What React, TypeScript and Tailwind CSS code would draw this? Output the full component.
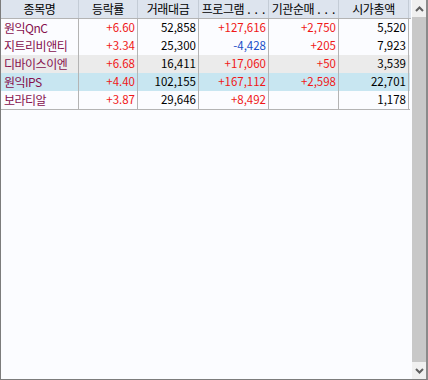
import React from "react";

type Row = {
  name: string;
  rate: string;
  vol: string;
  prog: string;
  inst: string;
  cap: string;
  bg: string;
};

const rows: Row[] = [
  { name: "원익QnC", rate: "+6.60", vol: "52,858", prog: "+127,616", inst: "+2,750", cap: "5,520", bg: "bg-[#fbfcff]" },
  { name: "지트리비앤티", rate: "+3.34", vol: "25,300", prog: "-4,428", inst: "+205", cap: "7,923", bg: "bg-[#fbfcff]" },
  { name: "디바이스이엔", rate: "+6.68", vol: "16,411", prog: "+17,060", inst: "+50", cap: "3,539", bg: "bg-[#ebebeb]" },
  { name: "원익IPS", rate: "+4.40", vol: "102,155", prog: "+167,112", inst: "+2,598", cap: "22,701", bg: "bg-[#c8e6f1]" },
  { name: "보라티알", rate: "+3.87", vol: "29,646", prog: "+8,492", inst: "", cap: "1,178", bg: "bg-[#fbfcff]" },
];

const widths = ["w-[78px]", "w-[59px]", "w-[61px]", "w-[70px]", "w-[70px]", "w-[70px]"];
const headers: { t: string; dots?: boolean }[] = [
  { t: "종목명" },
  { t: "등락률" },
  { t: "거래대금" },
  { t: "프로그램", dots: true },
  { t: "기관순매", dots: true },
  { t: "시가총액" },
];

const font = { fontFamily: '"Noto Sans CJK KR", "Noto Sans", sans-serif' };

function colorOf(v: string) {
  if (v.startsWith("+")) return "text-[#f01818]";
  if (v.startsWith("-")) return "text-[#1a4fc8]";
  return "text-black";
}

function NumCell({ w, v, color }: { w: string; v: string; color?: string }) {
  return (
    <div
      className={`${w} shrink-0 h-full border-r border-[#b4b4b4] flex items-center justify-end pr-[2px] text-[11.5px] ${color ?? colorOf(v)}`}
    >
      {v}
    </div>
  );
}

export default function App() {
  return (
    <div
      className="w-[428px] h-[380px] flex border-l border-b border-r-2 border-l-[#7c7c7c] border-b-[#7c7c7c] border-r-[#8a8a8a] bg-[#fbfcff] overflow-hidden"
      style={font}
    >
      <div className="w-[410px] shrink-0 flex flex-col">
        <div className="flex h-[19px] bg-[#dde4ee] border-b border-[#b4b4b4]">
          {headers.map((h, i) => (
            <div
              key={i}
              className={`${widths[i]} shrink-0 h-full border-r border-[#c4ccd6] flex items-center justify-center text-[12px] text-black tracking-[-0.4px] whitespace-nowrap overflow-hidden leading-none`}
            >
              {h.t}
              {h.dots && <span className="tracking-[4px] ml-[3px] mr-[-4px]">...</span>}
            </div>
          ))}
        </div>
        <div className="flex flex-col border-b border-[#b4b4b4] w-[409px]">
          {rows.map((r, i) => (
            <div key={i} className={`flex h-[18px] ${r.bg} leading-none`}>
              <div className={`${widths[0]} shrink-0 h-full border-r border-[#b4b4b4] flex items-center pl-[3px] text-[12px] tracking-[-0.5px] text-[#86104e] whitespace-nowrap overflow-hidden`}>
                {r.name}
              </div>
              <NumCell w={widths[1]} v={r.rate} />
              <NumCell w={widths[2]} v={r.vol} color="text-black" />
              <NumCell w={widths[3]} v={r.prog} />
              <NumCell w={widths[4]} v={r.inst} />
              <NumCell w={widths[5]} v={r.cap} color="text-black" />
            </div>
          ))}
        </div>
      </div>
      <div className="w-[1px] shrink-0" />
      <div className="w-[15px] shrink-0 h-full flex flex-col bg-[#c8c8c8]">
        <div className="h-[17px] bg-[#f0f0f0] flex items-center justify-center">
          <svg width="9" height="6" viewBox="0 0 9 6">
            <path d="M1 5 L4.5 1.5 L8 5" stroke="#606060" strokeWidth="2" fill="none" />
          </svg>
        </div>
        <div className="flex-1" />
        <div className="h-[17px] bg-[#f0f0f0] flex items-center justify-center">
          <svg width="9" height="6" viewBox="0 0 9 6">
            <path d="M1 1 L4.5 4.5 L8 1" stroke="#606060" strokeWidth="2" fill="none" />
          </svg>
        </div>
      </div>
    </div>
  );
}
